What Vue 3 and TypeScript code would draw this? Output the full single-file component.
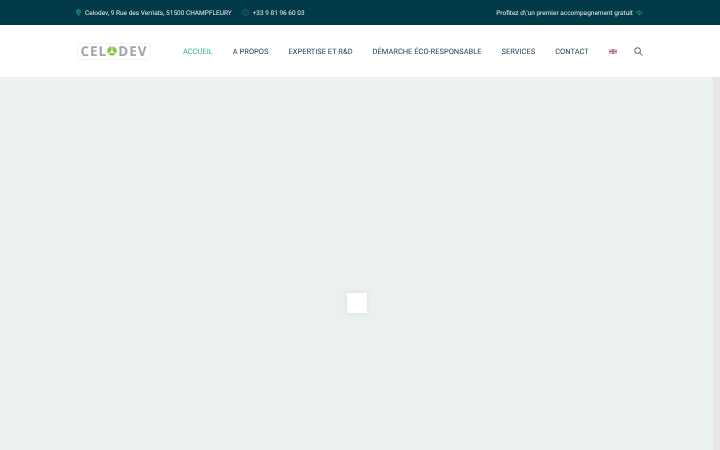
<script setup lang="ts">
type NavItem = {
  label: string
  active?: boolean
}

const navItems: NavItem[] = [
  { label: 'ACCUEIL', active: true },
  { label: 'A PROPOS' },
  { label: 'EXPERTISE ET R&D' },
  { label: 'DÉMARCHE ÉCO-RESPONSABLE' },
  { label: 'SERVICES' },
  { label: 'CONTACT' }
]
</script>

<template>
  <div class="page">
    <div class="topbar">
      <div class="topbar__left">
        <span class="topbar__item">
          <svg width="5" height="7" viewBox="0 0 5 7" fill="#14705f" stroke="#2fae85" stroke-width="0.5">
            <path d="M2.500 6.600C1.400 5 .4 3.900.4 2.500a2.100 2.100 0 0 1 4.200 0C4.600 3.900 3.600 5 2.500 6.600Z" />
          </svg>
          Celodev, 9 Rue des Verriats, 51500 CHAMPFLEURY
        </span>
        <span class="topbar__item">
          <svg width="7" height="7" viewBox="0 0 7 7" fill="none" stroke="#1f9a80" stroke-width="0.5">
            <circle cx="3.500" cy="3.500" r="3" />
            <path d="M3.500 1.700v2l1.300.7" />
          </svg>
          +33 9 81 96 60 03
        </span>
      </div>
      <div class="topbar__right">
        Profitez d\'un premier accompagnement gratuit
        <svg width="8" height="6" viewBox="0 0 8 6" fill="none" stroke="#2fae85" stroke-width="0.6">
          <path d="M.3 2h4.200V.6L7.500 2.800 4.500 5V3.700H2" />
        </svg>
      </div>
    </div>

    <header class="header">
      <div class="logo">
        <span>CEL</span>
        <svg class="logo__mark" width="10" height="10" viewBox="0 0 13 13">
          <circle cx="6.500" cy="6.500" r="6.200" fill="#8cc63f" />
          <path d="M6.500 4.200 9.200 9H3.800Z" fill="#fff" />
          <path d="M6.500 0v4.200M1 10.500 3.800 9M12 10.500 9.200 9" stroke="#fff" stroke-width="1.300" />
        </svg>
        <span>DEV</span>
      </div>
      <nav class="nav">
        <a
          v-for="item in navItems"
          :key="item.label"
          class="nav__link"
          :class="{ 'nav__link--active': item.active }"
        >{{ item.label }}</a>
        <svg class="nav__flag" width="8" height="5" viewBox="0 0 8 5">
          <rect width="8" height="5" fill="#cda6b8" />
          <path d="M0 0l8 5M8 0L0 5" stroke="#efe0e7" stroke-width="0.8" />
          <path d="M4 0v5M0 2.500h8" stroke="#c4597a" stroke-width="1" />
        </svg>
        <svg class="nav__search" width="9" height="9" viewBox="0 0 9 9" fill="none" stroke="#2c4a56" stroke-width="0.9">
          <circle cx="3.600" cy="3.600" r="2.900" />
          <path d="M5.700 5.700 8.500 8.500" />
        </svg>
      </nav>
    </header>

    <main class="content">
      <div class="content__stage">
        <div class="loader"></div>
      </div>
      <div class="content__rail"></div>
    </main>
  </div>
</template>

<style scoped>
.page {
  width: 720px;
  height: 450px;
  overflow: hidden;
  font-family: Roboto, "Liberation Sans", sans-serif;
  text-rendering: geometricPrecision;
}

.topbar {
  display: flex;
  align-items: center;
  justify-content: space-between;
  height: 25px;
  padding: 0 77px 0 76px;
  background: #023a4a;
  color: #e6eff1;
  font-size: 6.500px;
}

.topbar__left {
  display: flex;
  gap: 10px;
  filter: blur(0.2px);
}

.topbar__item {
  display: flex;
  align-items: center;
  gap: 4px;
}

.topbar__right {
  display: flex;
  align-items: center;
  gap: 2px;
  filter: blur(0.2px);
}

.header {
  display: flex;
  align-items: center;
  height: 52px;
  padding-left: 77px;
  background: #fff;
}

.logo {
  display: flex;
  align-items: center;
  justify-content: center;
  width: 74px;
  height: 17px;
  border: 1px solid #f3f3f3;
  border-radius: 4px;
  box-sizing: border-box;
  color: #a0a5a5;
  font-family: "Open Sans", sans-serif;
  font-size: 13.500px;
  font-weight: 700;
  letter-spacing: 1px;
  filter: blur(0.25px);
}

.logo__mark {
  margin: 0 1px 0 0;
}

.nav {
  display: flex;
  align-items: center;
  margin-left: 32px;
  gap: 20px;
  filter: blur(0.2px);
}

.nav__link {
  color: #163c49;
  font-size: 7.500px;
  white-space: nowrap;
}

.nav__link--active {
  color: #2fb58a;
}

.nav__search {
  margin-left: -3px;
}

.content {
  display: flex;
  height: 452px;
  background: #ebf0f0;
}

.content__stage {
  flex: 1;
  display: grid;
  place-items: center;
}

.content__rail {
  width: 7px;
  background: #e6e6e6;
}

.loader {
  width: 20px;
  height: 20px;
  background: #fff;
  box-shadow: 0 0 6px rgba(0, 0, 0, 0.08);
}
</style>
